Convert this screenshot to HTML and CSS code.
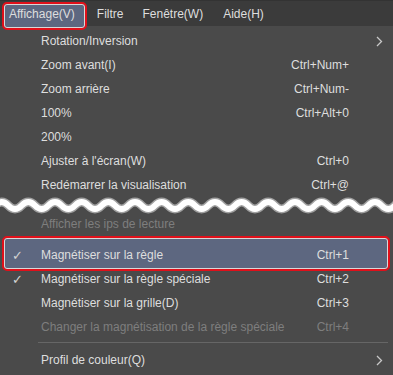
FILE: index.html
```html
<!DOCTYPE html>
<html>
<head>
    <title>Affichage</title>
    <meta name="viewport" content="width=device-width, initial-scale=1.0">
    <link rel="stylesheet" href="styles.css">
</head>
<body>
    <div class="menubar">
        <div class="menubar-item active">Affichage(V)</div>
        <div class="menubar-item">Filtre</div>
        <div class="menubar-item">Fenêtre(W)</div>
        <div class="menubar-item">Aide(H)</div>
    </div>

    <div class="menu">
        <div class="row">
            <span class="check"></span>
            <span class="label">Rotation/Inversion</span>
            <span class="arrow"><svg width="7" height="11" viewBox="0 0 7 11"><path d="M1 1 L5.5 5.5 L1 10" fill="none" stroke="#c8c8c8" stroke-width="1.3"/></svg></span>
        </div>
        <div class="row"><span class="check"></span><span class="label">Zoom avant(I)</span><span class="key">Ctrl+Num+</span></div>
        <div class="row"><span class="check"></span><span class="label">Zoom arrière</span><span class="key">Ctrl+Num-</span></div>
        <div class="row"><span class="check"></span><span class="label">100%</span><span class="key">Ctrl+Alt+0</span></div>
        <div class="row"><span class="check"></span><span class="label">200%</span><span class="key"></span></div>
        <div class="row"><span class="check"></span><span class="label">Ajuster à l'écran(W)</span><span class="key">Ctrl+0</span></div>
        <div class="row"><span class="check"></span><span class="label">Redémarrer la visualisation</span><span class="key">Ctrl+@</span></div>

        <!-- cut mark: the menu continues -->
        <div class="wave">
            <svg width="393" height="17" viewBox="0 0 393 17">
                <path class="wave-edge" d="M-5,8.5 q6.67,-7 13.33,0 t13.33,0 t13.33,0 t13.33,0 t13.33,0 t13.33,0 t13.33,0 t13.33,0 t13.33,0 t13.33,0 t13.33,0 t13.33,0 t13.33,0 t13.33,0 t13.33,0 t13.33,0 t13.33,0 t13.33,0 t13.33,0 t13.33,0 t13.33,0 t13.33,0 t13.33,0 t13.33,0 t13.33,0 t13.33,0 t13.33,0 t13.33,0 t13.33,0 t13.33,0 t13.33,0"/>
                <path class="wave-fill" d="M-5,8.5 q6.67,-7 13.33,0 t13.33,0 t13.33,0 t13.33,0 t13.33,0 t13.33,0 t13.33,0 t13.33,0 t13.33,0 t13.33,0 t13.33,0 t13.33,0 t13.33,0 t13.33,0 t13.33,0 t13.33,0 t13.33,0 t13.33,0 t13.33,0 t13.33,0 t13.33,0 t13.33,0 t13.33,0 t13.33,0 t13.33,0 t13.33,0 t13.33,0 t13.33,0 t13.33,0 t13.33,0 t13.33,0"/>
            </svg>
        </div>

        <div class="row disabled"><span class="check"></span><span class="label">Afficher les ips de lecture</span><span class="key"></span></div>
        <div class="row selected"><span class="check">✓</span><span class="label">Magnétiser sur la règle</span><span class="key">Ctrl+1</span></div>
        <div class="row"><span class="check">✓</span><span class="label">Magnétiser sur la règle spéciale</span><span class="key">Ctrl+2</span></div>
        <div class="row"><span class="check"></span><span class="label">Magnétiser sur la grille(D)</span><span class="key">Ctrl+3</span></div>
        <div class="row disabled"><span class="check"></span><span class="label">Changer la magnétisation de la règle spéciale</span><span class="key">Ctrl+4</span></div>
        <div class="separator"></div>
        <div class="row">
            <span class="check"></span>
            <span class="label">Profil de couleur(Q)</span>
            <span class="arrow"><svg width="7" height="11" viewBox="0 0 7 11"><path d="M1 1 L5.5 5.5 L1 10" fill="none" stroke="#c8c8c8" stroke-width="1.3"/></svg></span>
        </div>
    </div>
</body>
</html>
```

FILE: styles.css
```css
* {
    box-sizing: border-box;
    margin: 0;
    padding: 0;
}

body {
    font-family: "Liberation Sans", Arial, sans-serif;
    font-size: 12px;
    color: #dedede;
    background: #4a4a4a;
    width: 393px;
    height: 375px;
    overflow: hidden;
}

.menubar {
    height: 26px;
    background: #3b3b3b;
    border-top: 1px solid #333;
    display: flex;
    align-items: center;
    padding-left: 9px;
    position: relative;
    z-index: 1;
}

.menubar-item {
    line-height: 16px;
}

.menubar-item:nth-child(1) {
    margin-right: 22px;
}

.menubar-item:nth-child(2) {
    margin-right: 19px;
}

.menubar-item:nth-child(3) {
    margin-right: 20px;
}

.menubar-item.active {
    position: relative;
}

/* red annotation frame over the open menu title */
.menubar-item.active::before {
    content: "";
    position: absolute;
    top: -4px;
    bottom: -8px;
    left: -7px;
    right: -12px;
    background: #5d6780;
    border: 2px solid #e0101a;
    border-radius: 5px;
    box-shadow: inset 0 0 0 1px #d8d8d8;
    z-index: -1;
}

.menu {
    padding-top: 3px;
}

.row {
    height: 24px;
    display: flex;
    align-items: center;
}

.check {
    width: 41px;
    padding-left: 12px;
    font-size: 13px;
    color: #d4d4d4;
    flex-shrink: 0;
}

.label {
    flex: 1;
    white-space: nowrap;
}

.key {
    width: 110px;
    padding-right: 44px;
    text-align: right;
    white-space: nowrap;
}

.arrow {
    width: 110px;
    padding-right: 10px;
    display: flex;
    justify-content: flex-end;
}

.disabled {
    color: #7e7e7e;
}

.wave {
    height: 15px;
    overflow: visible;
}

.wave svg {
    display: block;
}

.wave-edge {
    fill: none;
    stroke: #a0a0a0;
    stroke-width: 9;
}

.wave-fill {
    fill: none;
    stroke: #ffffff;
    stroke-width: 6;
}

.selected {
    position: relative;
    z-index: 0;
    margin-top: 7px;
}

/* red annotation frame over the highlighted item */
.selected::before {
    content: "";
    position: absolute;
    top: -7px;
    bottom: -4px;
    left: 2px;
    right: 3px;
    background: #5d6780;
    border: 2px solid #e0101a;
    border-radius: 5px;
    box-shadow: inset 0 0 0 1px #d8d8d8;
    z-index: -1;
}

.separator {
    height: 1px;
    background: #666;
    margin: 3px 5px 5px 38px;
}
```
